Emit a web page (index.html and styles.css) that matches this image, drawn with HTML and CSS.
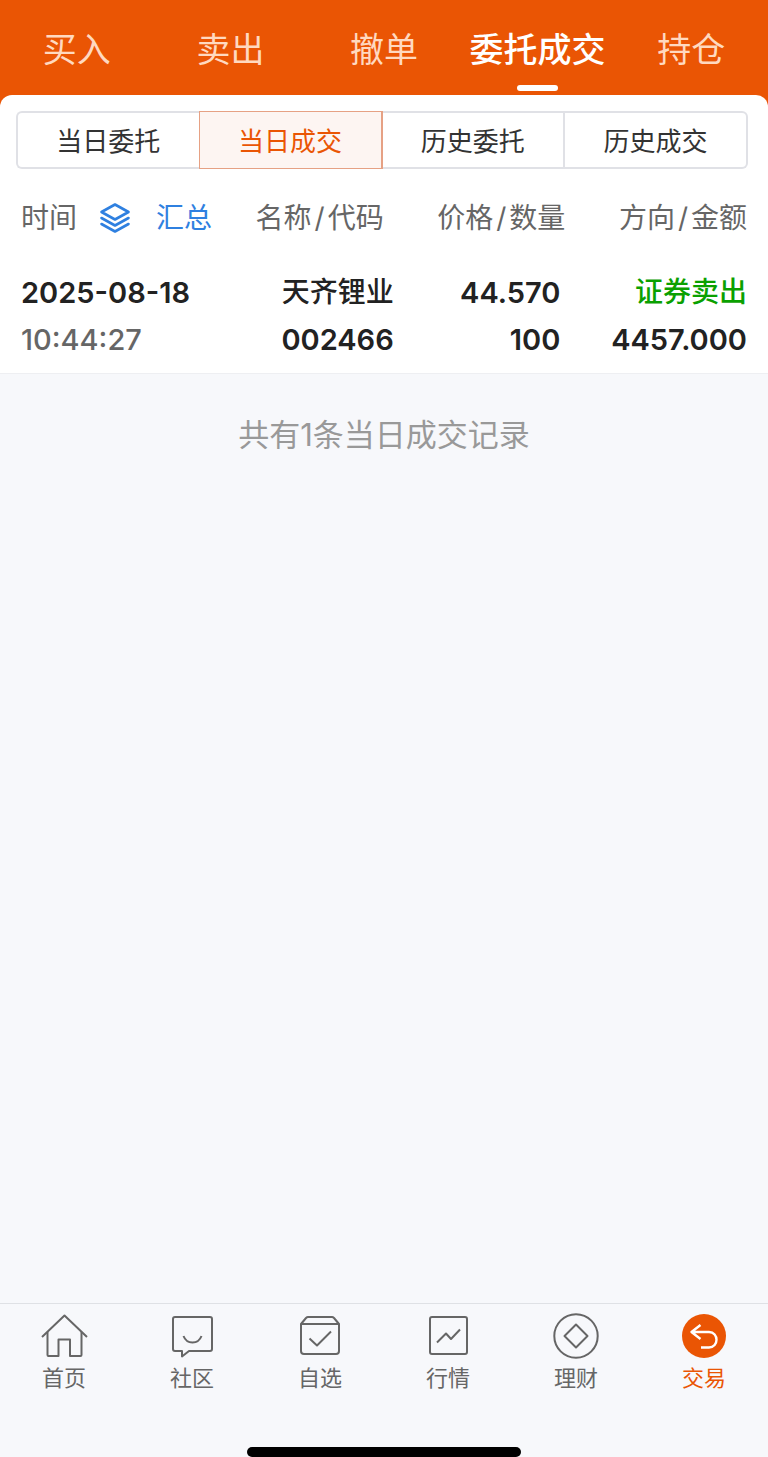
FILE: index.html
```html
<!DOCTYPE html>
<html lang="zh-CN">
<head>
    <meta charset="UTF-8">
    <meta name="viewport" content="width=device-width, initial-scale=1.0">
    <title>当日成交</title>
    <link rel="stylesheet" href="styles.css">
</head>
<body>
    <header class="top">
        <nav class="tabs">
            <a href="#" class="tab">买入</a>
            <a href="#" class="tab">卖出</a>
            <a href="#" class="tab">撤单</a>
            <a href="#" class="tab active">委托成交</a>
            <a href="#" class="tab">持仓</a>
        </nav>
        <section class="card">
            <div class="segment">
                <button class="segment-btn">当日委托</button>
                <button class="segment-btn active">当日成交</button>
                <button class="segment-btn">历史委托</button>
                <button class="segment-btn">历史成交</button>
            </div>
            <table class="deals">
                <thead>
                    <tr>
                        <th class="col-time">
                            <div class="time-head">
                                <span>时间</span>
                                <button class="summary-btn">
                                    <svg width="32" height="36" viewBox="0 -4 32 36" fill="none" stroke="currentColor" stroke-width="2.6" stroke-linejoin="round" stroke-linecap="round">
                                        <path d="M16 2.5 L29.5 10 L16 17.5 L2.5 10 Z"/>
                                        <path d="M2.5 16 L16 23.5 L29.5 16"/>
                                        <path d="M2.5 22 L16 29.5 L29.5 22"/>
                                    </svg>
                                    汇总
                                </button>
                            </div>
                        </th>
                        <th class="col-name">名称<span class="slash">/</span>代码</th>
                        <th class="col-price">价格<span class="slash">/</span>数量</th>
                        <th class="col-side">方向<span class="slash">/</span>金额</th>
                    </tr>
                </thead>
                <tbody>
                    <tr>
                        <td class="col-time">
                            <div>2025-08-18</div>
                            <div class="time">10:44:27</div>
                        </td>
                        <td class="col-name">
                            <div class="stock">天齐锂业</div>
                            <div>002466</div>
                        </td>
                        <td class="col-price">
                            <div>44.570</div>
                            <div>100</div>
                        </td>
                        <td class="col-side">
                            <div class="stock sell">证券卖出</div>
                            <div>4457.000</div>
                        </td>
                    </tr>
                </tbody>
            </table>
        </section>
    </header>

    <main class="content">
        <p class="total">共有1条当日成交记录</p>
    </main>

    <footer class="bottom">
        <nav class="menu">
            <a href="#" class="menu-item">
                <svg class="icon" viewBox="0 0 48 48">
                    <path d="M2 25 L24.500 3.500 L47 25"/>
                    <path d="M7.500 20 V43 Q7.500 44 8.500 44 H18.500 V27.500 H30 V44 H40.500 Q41.500 44 41.500 43 V20"/>
                </svg>
                首页
            </a>
            <a href="#" class="menu-item">
                <svg class="icon" viewBox="0 0 48 48">
                    <path d="M7 5 H42 Q44 5 44 7 V37 Q44 39 42 39 H21 L14 44.500 V39 H7 Q5 39 5 37 V7 Q5 5 7 5"/>
                    <path d="M15.500 24 Q18 30.500 24.500 30.500 Q31 30.500 33.500 24"/>
                </svg>
                社区
            </a>
            <a href="#" class="menu-item">
                <svg class="icon" viewBox="0 0 48 48">
                    <path d="M5 12 L10 6 Q11 5 12 5 H36 Q37 5 38 6 L43 12 V39 Q43 42 40 42 H8 Q5 42 5 39 Z M5 12 H43"/>
                    <path d="M13.500 26.500 L21 33.500 L35 19.500"/>
                </svg>
                自选
            </a>
            <a href="#" class="menu-item">
                <svg class="icon" viewBox="0 0 48 48">
                    <rect x="6" y="5" width="37" height="37" rx="2"/>
                    <path d="M13 30.500 L22 21.500 L27 27 L36 17.500"/>
                </svg>
                行情
            </a>
            <a href="#" class="menu-item">
                <svg class="icon" viewBox="0 0 48 48">
                    <circle cx="24" cy="24" r="21.700"/>
                    <path d="M24 12.500 L35.500 24 L24 35.500 L12.500 24 Z"/>
                </svg>
                理财
            </a>
            <a href="#" class="menu-item active">
                <svg class="icon" viewBox="0 0 48 48">
                    <circle class="icon-bg" cx="24" cy="24" r="22"/>
                    <path d="M20.500 13 L11.500 20 L20.500 27 M11.500 20 H29 C39 20 39 35.500 29 35.500 H21"/>
                </svg>
                交易
            </a>
        </nav>
        <div class="home-bar"></div>
    </footer>
</body>
</html>
```
FILE: styles.css
```css
* {
    box-sizing: border-box;
}

body {
    margin: 0;
    min-height: 100vh;
    display: flex;
    flex-direction: column;
    background-color: #f7f8fb;
    color: #222;
    font-family: Inter, "Noto Sans CJK SC", sans-serif;
}

a {
    text-decoration: none;
    color: inherit;
}

button {
    padding: 0;
    border: none;
    background: none;
    font: inherit;
    color: inherit;
    cursor: pointer;
}

.top {
    background-color: #ea5504;
}

.tabs {
    display: grid;
    grid-template-columns: repeat(5, 1fr);
    height: 95px;
    color: #ffd9c0;
    font-size: 34px;
    line-height: 48px;
    text-align: center;
}

.tab {
    padding-top: 26px;
    white-space: nowrap;
}

.tab.active {
    color: #fff;
    font-weight: 500;
}

.tab.active::after {
    content: "";
    display: block;
    width: 41px;
    height: 6px;
    margin: 11px auto 0;
    border-radius: 3px;
    background-color: #fff;
}

.card {
    padding: 16px 16px 0;
    border-bottom: 1px solid #eeeff2;
    border-radius: 12px 12px 0 0;
    background-color: #fff;
}

.segment {
    display: flex;
    margin-right: 4px;
}

.segment-btn {
    flex: 1;
    height: 58px;
    padding-bottom: 2px;
    border: 2px solid #e0e1e6;
    border-left-width: 0;
    font-size: 26px;
    color: #333;
}

.segment-btn:first-child {
    border-left-width: 2px;
    border-right-width: 0;
    border-radius: 6px 0 0 6px;
}

.segment-btn:last-child {
    border-radius: 0 6px 6px 0;
}

.segment-btn.active {
    border: 1px solid #e6a184;
    border-right-width: 2px;
    background-color: #fdf5f2;
    color: #ea5504;
}

.deals {
    width: 100%;
    table-layout: fixed;
    border-collapse: collapse;
    white-space: nowrap;
}

.deals th {
    height: 94px;
    padding: 0 5px;
    color: #666;
    font-size: 28px;
    font-weight: 400;
    text-align: right;
}

.deals td {
    padding: 6px 5px 10px;
    font-size: 29px;
    font-weight: 600;
    line-height: 47px;
    text-align: right;
}

.deals .col-time {
    width: 29%;
    text-align: left;
}

.deals .col-name {
    width: 23%;
}

.deals th.col-name {
    padding-right: 15px;
}

.deals .col-price {
    width: 24%;
}

.deals th.col-price {
    padding-right: 10px;
}

.deals td.col-price {
    padding-right: 15px;
}

.slash {
    margin: 0 3px;
}

.time {
    color: #666;
    font-weight: 500;
}

.stock {
    font-size: 28px;
    font-weight: 500;
}

.sell {
    color: #0aa000;
}

.time-head {
    display: flex;
    align-items: center;
    gap: 22px;
}

.summary-btn {
    display: flex;
    align-items: center;
    gap: 25px;
    color: #2f80e0;
}

.content {
    flex: 1;
}

.total {
    margin: 39px 0;
    color: #999;
    font-size: 31px;
    line-height: 44px;
    text-align: center;
}

.bottom {
    border-top: 1px solid #dfe1e5;
}

.menu {
    display: grid;
    grid-template-columns: repeat(6, 1fr);
    height: 143px;
    padding-top: 8px;
    color: #666;
    font-size: 22px;
    line-height: 32px;
}

.menu-item {
    display: flex;
    flex-direction: column;
    align-items: center;
    gap: 2px;
}

.menu-item.active {
    color: #ea5504;
}

.icon {
    width: 48px;
    height: 48px;
    fill: none;
    stroke: #666;
    stroke-width: 2;
    stroke-linejoin: round;
}

.active .icon {
    stroke: #fff;
    stroke-width: 2.4;
}

.icon .icon-bg {
    fill: #ea5504;
    stroke: none;
}

.home-bar {
    width: 274px;
    height: 10px;
    margin: 0 auto;
    border-radius: 5px;
    background-color: #000;
}
```
